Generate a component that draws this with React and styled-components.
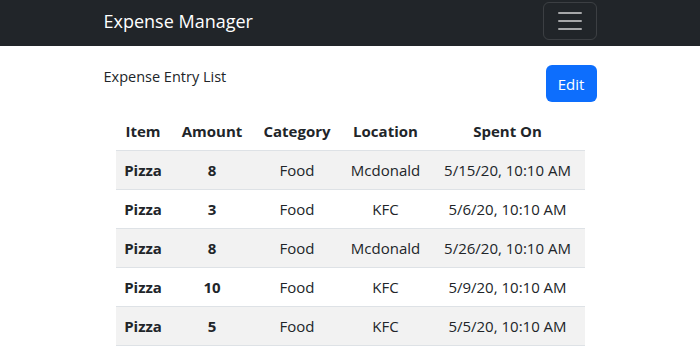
import React from "react";
import styled, { createGlobalStyle } from "styled-components";

const GlobalStyle = createGlobalStyle`
  body {
    margin: 0;
    font-family: "Open Sans", "Noto Sans", sans-serif;
    color: #212529;
    background: #fff;
  }
`;

const Navbar = styled.nav`
  background-color: #212529;
  height: 46px;
`;

const Container = styled.div`
  width: 493px;
  margin: 0 auto;
`;

const NavInner = styled(Container)`
  display: flex;
  justify-content: space-between;
  align-items: center;
  height: 40px;
`;

const Brand = styled.a`
  color: #fff;
  font-size: 18px;
  line-height: 28px;
  text-decoration: none;
  margin-top: 2px;
`;

const Toggler = styled.button`
  display: flex;
  flex-direction: column;
  justify-content: center;
  gap: 6px;
  align-items: center;
  width: 54px;
  height: 38px;
  margin-top: 1px;
  padding: 0;
  background: transparent;
  border: 1px solid rgba(255, 255, 255, 0.12);
  border-radius: 6px;
  > span {
    display: block;
    width: 24px;
    height: 2px;
    border-radius: 1px;
    background: rgba(255, 255, 255, 0.6);
  }
`;

const HeadRow = styled.div`
  display: flex;
  justify-content: space-between;
  align-items: flex-start;
  margin-top: 19px;
`;

const Title = styled.div`
  font-size: 14.5px;
  line-height: 24px;
`;

const EditButton = styled.button`
  width: 51px;
  height: 37px;
  padding: 0;
  border: none;
  border-radius: 6px;
  background-color: #0d6efd;
  color: #fff;
  font-family: inherit;
  font-size: 15px;
`;

const Table = styled.table`
  width: 469px;
  margin: 10px 0 0 12px;
  border-collapse: collapse;
  table-layout: fixed;
  font-size: 15px;
`;

const Th = styled.th`
  height: 38px;
  padding: 0;
  font-weight: 700;
  text-align: center;
  border-bottom: 1px solid #dee2e6;
`;

const Row = styled.tr`
  background-color: ${(p) => (p.$odd ? "#f2f2f2" : "#fff")};
`;

const Td = styled.td`
  height: 38px;
  padding: 0;
  text-align: center;
  font-weight: ${(p) => (p.$bold ? 700 : 400)};
  border-bottom: 1px solid #dee2e6;
`;

const expenses = [
  { item: "Pizza", amount: 8, category: "Food", location: "Mcdonald", spent: "5/15/20, 10:10 AM" },
  { item: "Pizza", amount: 3, category: "Food", location: "KFC", spent: "5/6/20, 10:10 AM" },
  { item: "Pizza", amount: 8, category: "Food", location: "Mcdonald", spent: "5/26/20, 10:10 AM" },
  { item: "Pizza", amount: 10, category: "Food", location: "KFC", spent: "5/9/20, 10:10 AM" },
  { item: "Pizza", amount: 5, category: "Food", location: "KFC", spent: "5/5/20, 10:10 AM" },
];

const widths = [55, 83, 87, 90, 154];

const App = () => {
  return (
    <>
      <GlobalStyle />
      <Navbar>
        <NavInner>
          <Brand href="#">Expense Manager</Brand>
          <Toggler aria-label="Toggle navigation">
            <span />
            <span />
            <span />
          </Toggler>
        </NavInner>
      </Navbar>
      <Container>
        <HeadRow>
          <Title>Expense Entry List</Title>
          <EditButton>Edit</EditButton>
        </HeadRow>
        <Table>
          <colgroup>
            {widths.map((w, i) => (
              <col key={i} style={{ width: w }} />
            ))}
          </colgroup>
          <thead>
            <tr>
              <Th>Item</Th>
              <Th>Amount</Th>
              <Th>Category</Th>
              <Th>Location</Th>
              <Th>Spent On</Th>
            </tr>
          </thead>
          <tbody>
            {expenses.map((e, i) => (
              <Row key={i} $odd={i % 2 === 0}>
                <Td $bold>{e.item}</Td>
                <Td $bold>{e.amount}</Td>
                <Td>{e.category}</Td>
                <Td>{e.location}</Td>
                <Td>{e.spent}</Td>
              </Row>
            ))}
          </tbody>
        </Table>
      </Container>
    </>
  );
};

export default App;
